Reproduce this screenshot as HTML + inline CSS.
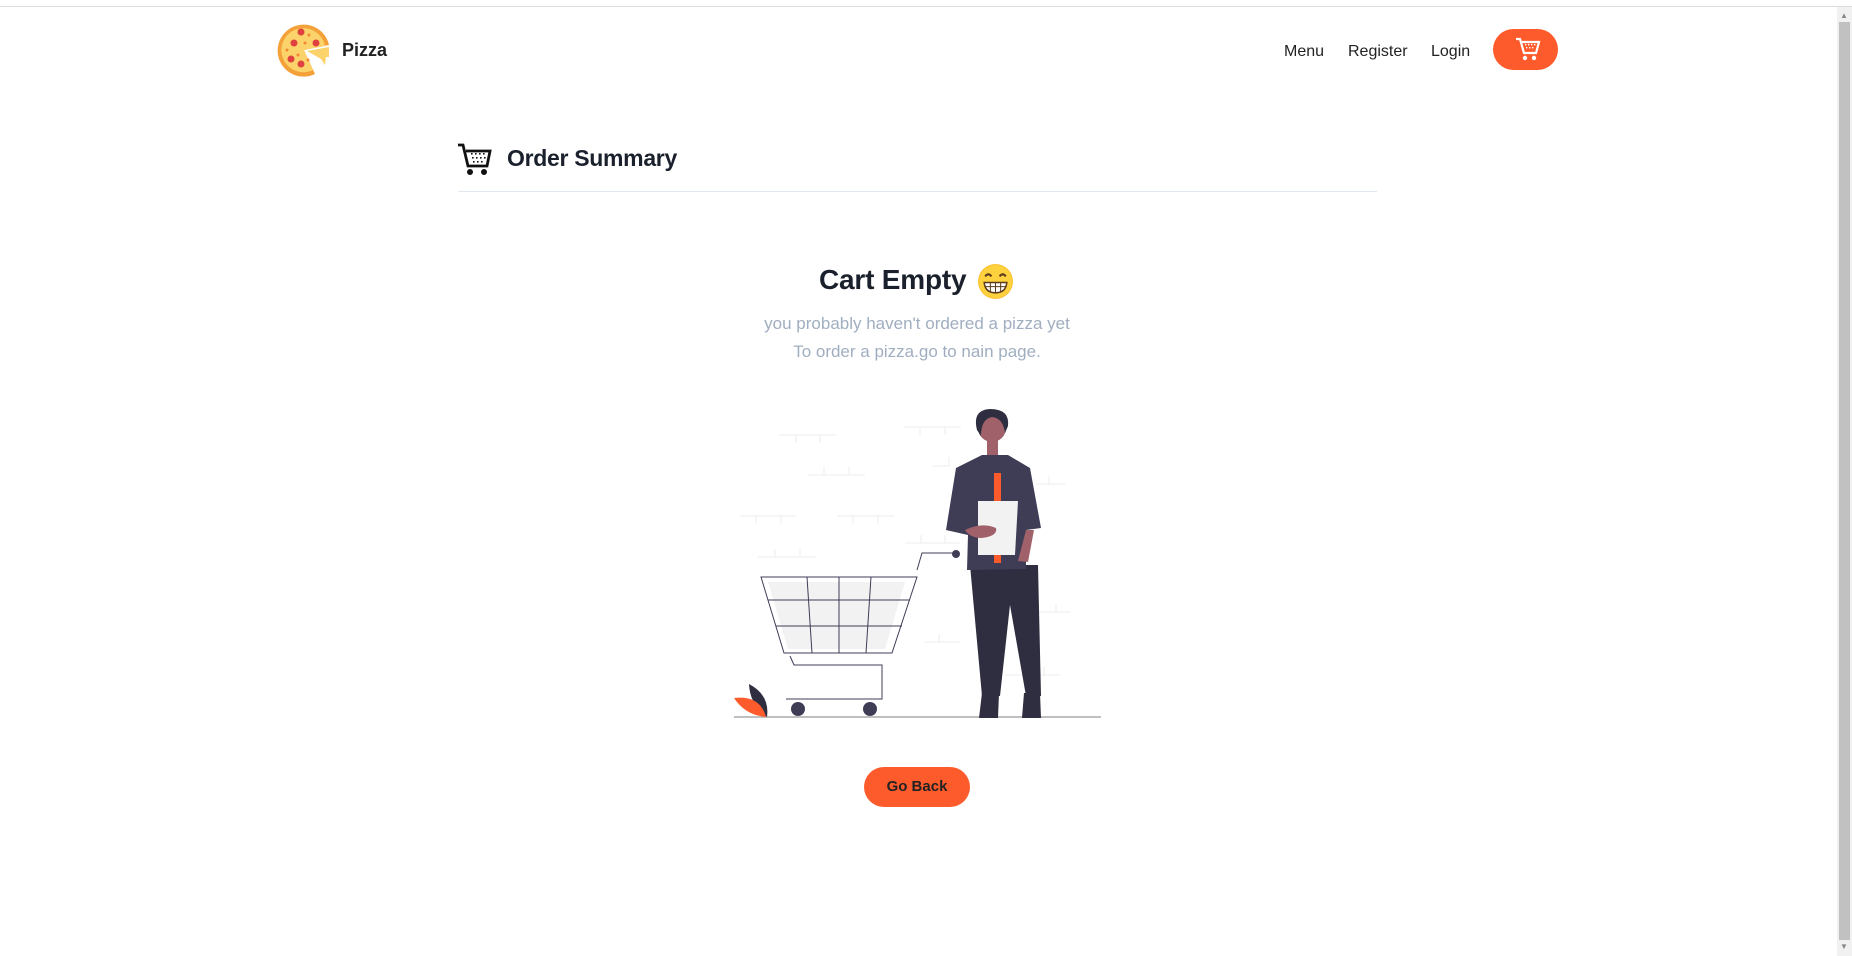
<!DOCTYPE html>
<html><head><meta charset="utf-8"><style>
*{margin:0;padding:0;box-sizing:border-box}
body{width:1852px;height:956px;overflow:hidden;background:#fff;font-family:"Liberation Sans",sans-serif;position:relative;color:#1a202c}
.abs{position:absolute}
.nav a{position:absolute;top:41px;font-size:16px;color:#222;text-decoration:none;line-height:22px}
</style></head><body>
<div class="abs" style="left:0;top:6px;width:1852px;height:1px;background:#dcdcdc"></div>
<div class="abs" style="left:1837px;top:7px;width:15px;height:949px;background:#f1f1f1"></div>
<div class="abs" style="left:1839px;top:22px;width:11px;height:918px;background:#c1c1c1"></div>
<div class="abs" style="left:1840px;top:11px;font-size:8px;color:#888">▲</div>
<div class="abs" style="left:1840px;top:942px;font-size:8px;color:#888">▼</div>

<svg class="abs" style="left:277px;top:23px" width="54" height="54" viewBox="0 0 54 54">
<path d="M27 27 L52 22 A26 26 0 1 0 38 51 Z" fill="#f4a13a"/>
<path d="M27 27 L48 23 A22 22 0 1 0 36 47 Z" fill="#fcd36a"/>
<path d="M30 28 L52 24 L52 34 L49 34 L48 42 L44 36 Z" fill="#fcd36a"/>
<g fill="#e0413f"><circle cx="24" cy="9" r="3.5"/><circle cx="39" cy="20" r="3.5"/><circle cx="17" cy="20" r="3.5"/><circle cx="14" cy="36" r="3.5"/><circle cx="24" cy="41" r="3.5"/></g>
<g fill="#f08a30"><circle cx="32" cy="12" r="1.5"/><circle cx="10" cy="27" r="1.5"/><circle cx="28" cy="20" r="1.5"/><circle cx="21" cy="32" r="1.5"/><circle cx="31" cy="37" r="1.5"/></g>
</svg>
<div class="abs" style="left:342px;top:40px;font-size:18px;font-weight:bold;color:#222">Pizza</div>

<div class="nav">
<a style="left:1284px">Menu</a>
<a style="left:1348px">Register</a>
<a style="left:1431px">Login</a>
</div>
<div class="abs" style="left:1493px;top:29px;width:65px;height:41px;border-radius:21px;background:#fe5b2c"></div>
<svg class="abs" style="left:1515px;top:36px" width="26" height="26" viewBox="0 0 26 26">
<path d="M1 3 H5 L9 17 H21 L24 6 H7" fill="none" stroke="#fff" stroke-width="2.2"/>
<g fill="#fff"><circle cx="10" cy="22" r="2.2"/><circle cx="19" cy="22" r="2.2"/></g>
<g fill="#fff"><rect x="10" y="8" width="1.4" height="1.4"/><rect x="13" y="8" width="1.4" height="1.4"/><rect x="16" y="8" width="1.4" height="1.4"/><rect x="19" y="8" width="1.4" height="1.4"/><rect x="11" y="11" width="1.4" height="1.4"/><rect x="14" y="11" width="1.4" height="1.4"/><rect x="17" y="11" width="1.4" height="1.4"/></g>
</svg>

<svg class="abs" style="left:457px;top:142px" width="36" height="34" viewBox="0 0 36 34">
<path d="M1 3 H6 L11 24 H30 L33 9 H9" fill="none" stroke="#111" stroke-width="2.8"/>
<g fill="#111"><circle cx="13" cy="30" r="3"/><circle cx="27" cy="30" r="3"/></g>
<g fill="#111"><rect x="14" y="11" width="1.6" height="1.6"/><rect x="18" y="11" width="1.6" height="1.6"/><rect x="22" y="11" width="1.6" height="1.6"/><rect x="26" y="11" width="1.6" height="1.6"/><rect x="15" y="15" width="1.6" height="1.6"/><rect x="19" y="15" width="1.6" height="1.6"/><rect x="23" y="15" width="1.6" height="1.6"/><rect x="27" y="15" width="1.6" height="1.6"/><rect x="16" y="19" width="1.6" height="1.6"/><rect x="20" y="19" width="1.6" height="1.6"/><rect x="24" y="19" width="1.6" height="1.6"/></g>
</svg>
<div class="abs" style="left:507px;top:145px;font-size:23px;font-weight:bold;color:#1a202c;letter-spacing:-0.3px">Order Summary</div>
<div class="abs" style="left:458px;top:191px;width:919px;height:1px;background:#e2e8f0"></div>

<div class="abs" style="left:819px;top:264px;font-size:28px;font-weight:bold;color:#1a202c;letter-spacing:-0.2px">Cart Empty</div>
<svg class="abs" style="left:977px;top:263px" width="37" height="37" viewBox="0 0 36 36">
<circle cx="18" cy="18" r="17" fill="#fbc02d"/><circle cx="18" cy="18" r="16" fill="#fdd23e"/>
<path d="M8 13 Q11 9 14 13 M22 13 Q25 9 28 13" fill="none" stroke="#5d3a1a" stroke-width="2"/>
<path d="M7 19 H29 Q28 29 18 29 Q8 29 7 19 Z" fill="#fff" stroke="#5d3a1a" stroke-width="1.5"/>
<path d="M7.5 23 H28.5 M13 19 V28 M18 19 V29 M23 19 V28" stroke="#5d3a1a" stroke-width="1"/>
</svg>
<div class="abs" style="left:0;width:1834px;text-align:center;top:310px;font-size:17px;line-height:28px;color:#a0aec0">you probably haven't ordered a pizza yet<br>To order a pizza.go to nain page.</div>

<svg class="abs" style="left:720px;top:400px" width="400" height="330" viewBox="0 0 400 330">
<g stroke="#ececec" stroke-width="1" fill="none">
<path d="M59 35 H116 M76 35 V43 M100 35 V43 M88 75 H145 M104 67 V75 M129 67 V75 M184 27 H241 M200 27 V35 M225 27 V35 M212 66 H230 M229 57 V66 M20 116 H76 M36 116 V124 M61 116 V124 M117 116 H174 M133 116 V124 M158 116 V124 M38 157 H96 M55 149 V157 M80 149 V157 M185 143 H240 M201 135 V143 M225 135 V143 M316 84 H345 M329 76 V84 M316 212 H351 M336 204 V212 M204 242 H240 M219 234 V242 M285 275 H340 M324 267 V275"/>
</g>
<path d="M14 317 H381" stroke="#aaa" stroke-width="1.5"/>
<polygon points="48,182 185,182 165,249 68,249" fill="#f2f2f2"/>
<g stroke="#3f3d56" stroke-width="1" fill="none">
<polygon points="41,177 197,177 172,253 64,253"/>
<path d="M48 200 H190 M56 226 H182 M87 177 L92 253 M119 177 V253 M151 177 L146 253"/>
<path d="M197 170 L202 153 H233 M70 256 L74 265 H162 V299 H66"/>
</g>
<g fill="#3f3d56"><circle cx="236" cy="154" r="4"/><circle cx="78" cy="309" r="7"/><circle cx="150" cy="309" r="7"/></g>
<path d="M29 284 Q50 295 47 317 Q30 305 29 284 Z" fill="#2f2e41"/>
<path d="M14 298 Q40 295 46 317 Q25 315 14 298 Z" fill="#fe5b2c"/>
<path d="M250 165 L318 165 L321 296 L306 296 L290 205 L280 296 L262 296 Z" fill="#2f2e41"/>
<path d="M262 293 H279 L278 318 H259 Z M304 293 H320 L321 318 H302 Z" fill="#2f2e41"/>
<path d="M236 68 L262 55 H288 L310 68 L321 128 L306 130 L306 169 L247 170 L248 135 L226 130 Z" fill="#3f3d56"/>
<rect x="274" y="73" width="7" height="90" fill="#fe5b2c"/>
<path d="M258 101 H298 L295 155 H258 Z" fill="#f2f2f2"/>
<path d="M245 130 Q262 122 276 128 Q278 136 262 138 Q250 138 245 130 Z" fill="#a0616a"/>
<path d="M306 130 L314 130 L308 162 L298 161 Z" fill="#a0616a"/>
<rect x="267" y="38" width="11" height="17" fill="#a0616a"/>
<circle cx="272" cy="28" r="14" fill="#a0616a"/>
<path d="M257 30 Q252 10 270 9 Q290 9 288 26 L285 33 Q283 18 272 17 Q261 19 261 36 Z" fill="#2f2e41"/>
</svg>

<div class="abs" style="left:864px;top:767px;width:106px;height:40px;border-radius:20px;background:#fe5b2c;text-align:center;line-height:40px;font-size:15px;font-weight:bold;color:#222">Go Back</div>
</body></html>
